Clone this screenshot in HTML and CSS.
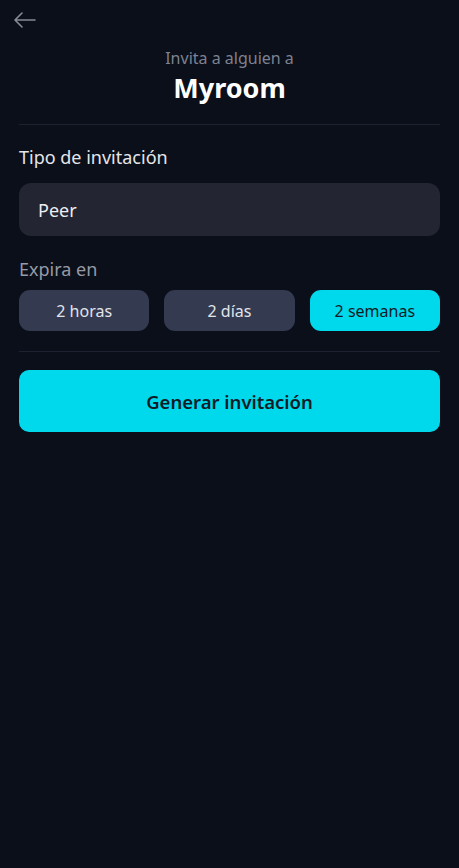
FILE: index.html
```html
<!DOCTYPE html>
<html lang="es">
<head>
    <meta charset="UTF-8">
    <meta name="viewport" content="width=device-width, initial-scale=1.0">
    <title>Invitar a Myroom</title>
    <link rel="stylesheet" href="styles.css">
</head>
<body>

    <div class="page">
        <a href="#" class="back-button" aria-label="Volver">
            <svg width="24" height="24" viewBox="0 0 24 24" fill="none">
                <path d="M23 12H3M10 5L3 12L10 19" stroke="#868b98" stroke-width="1.6" stroke-linecap="round" stroke-linejoin="round"/>
            </svg>
        </a>

        <div class="header">
            <p class="subtitle">Invita a alguien a</p>
            <h1 class="room-name">Myroom</h1>
        </div>

        <hr class="divider">

        <p class="label">Tipo de invitación</p>
        <div class="select-box">Peer</div>

        <p class="label label-muted">Expira en</p>
        <div class="options">
            <button class="option">2 horas</button>
            <button class="option">2 días</button>
            <button class="option option-active">2 semanas</button>
        </div>

        <hr class="divider divider-bottom">

        <button class="primary-button">Generar invitación</button>
    </div>

</body>
</html>
```

FILE: styles.css
```css
body {
    font-family: 'Noto Sans', 'Open Sans', sans-serif;
    background-color: #0b0f19;
    margin: 0;
    min-height: 100vh;
    color: #e4e6ea;
}
.page {
    padding: 0 19px;
}

/* 戻るボタン */
.back-button {
    display: block;
    width: 24px;
    height: 24px;
    margin: 8px 0 0 -7px;
}
.back-button svg {
    display: block;
}

.header {
    text-align: center;
}
.subtitle {
    margin: 15px 0 0;
    font-size: 16px;
    line-height: 22px;
    color: #7d8291;
}
.room-name {
    margin: 2px 0 0;
    font-size: 27px;
    line-height: 34px;
    font-weight: 700;
    color: #ffffff;
}

.divider {
    border: none;
    height: 1px;
    background-color: #1e2230;
    margin: 19px 0 0;
}

.label {
    margin: 20px 0 0;
    font-size: 18px;
    line-height: 24px;
    color: #e4e6ea;
}
.label-muted {
    margin-top: 21px;
    color: #959aa6;
}

/* 入力欄 */
.select-box {
    margin-top: 14px;
    height: 53px;
    box-sizing: border-box;
    padding: 0 19px;
    display: flex;
    align-items: center;
    background-color: #232532;
    border-radius: 12px;
    font-size: 18px;
    color: #eceef1;
}

/* 期限の選択 */
.options {
    margin-top: 9px;
    display: grid;
    grid-template-columns: repeat(3, 1fr);
    gap: 15px;
}
.option {
    height: 41px;
    border: none;
    border-radius: 11px;
    background-color: #343a4f;
    color: #e1e4ea;
    font-family: inherit;
    font-size: 16px;
    cursor: pointer;
    padding: 0;
}
.option-active {
    background-color: #00d8ec;
    color: #0f1a26;
}

.divider-bottom {
    margin-top: 20px;
}

.primary-button {
    display: block;
    width: 100%;
    margin-top: 18px;
    height: 62px;
    border: none;
    border-radius: 10px;
    background-color: #00d8ec;
    color: #0f1c27;
    font-family: inherit;
    font-size: 18.5px;
    font-weight: 600;
    cursor: pointer;
}
```
